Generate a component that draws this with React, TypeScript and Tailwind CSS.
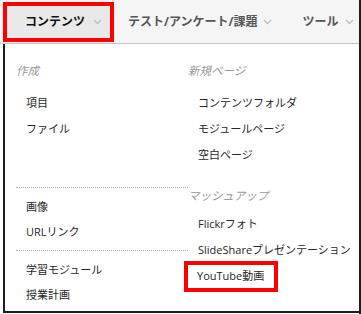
const font = { fontFamily: '"Open Sans", "Noto Sans CJK JP", sans-serif' };

function Chevron() {
  return (
    <svg width="9" height="6" viewBox="0 0 9 6" className="shrink-0">
      <polyline points="1,1 4.5,4.5 8,1" fill="none" stroke="#bdbdbd" strokeWidth="1.3" />
    </svg>
  );
}

function Header({ label }: { label: string }) {
  return (
    <div className="h-[20px] flex items-center text-[11.5px] italic text-[#999]">{label}</div>
  );
}

function Item({ label }: { label: string }) {
  return (
    <div className="h-[26px] flex items-center pl-[10px] text-[11px] text-[#262626] whitespace-nowrap">
      {label}
    </div>
  );
}

function Divider() {
  return <div className="border-t border-dotted border-[#b5b5b5]" />;
}

export default function App() {
  return (
    <div className="w-[361px] h-[314px] bg-white flex flex-col border-r-2 border-[#1e1e1e]" style={font}>
      <nav className="h-[44px] bg-[#f5f5f5] border-b border-[#c4c4c4] flex items-start pt-[2px] pl-[3px]">
        <div className="w-[111px] h-[40px] border-4 border-[#ff0000] bg-[#e9e9e9] flex items-center pl-[18px] gap-[8px]">
          <span className="text-[12px] font-bold text-[#111]">コンテンツ</span>
          <Chevron />
        </div>
        <div className="h-[40px] flex items-center ml-[14px] gap-[6px]">
          <span className="text-[12px] font-bold text-[#555]">テスト/アンケート/課題</span>
          <Chevron />
        </div>
        <div className="h-[40px] flex items-center ml-[30px] gap-[7px]">
          <span className="text-[12px] font-bold text-[#555]">ツール</span>
          <Chevron />
        </div>
      </nav>

      <div className="flex-1 ml-[3px] mb-[1px] border-l-2 border-b-2 border-[#1e1e1e] flex pl-[11px]">
        <div className="w-[172px] flex flex-col pt-[17px]">
          <Header label="作成" />
          <div className="mt-[9px]">
            <Item label="項目" />
            <Item label="ファイル" />
          </div>
          <div className="mt-[45px]">
            <Divider />
          </div>
          <div className="mt-[7px]">
            <div className="h-[25px] flex items-center pl-[10px] text-[11px] text-[#262626]">画像</div>
            <div className="h-[25px] flex items-center pl-[10px] text-[11px] text-[#262626]">URLリンク</div>
          </div>
          <div className="mt-[5px]">
            <Divider />
          </div>
          <div className="mt-[7px]">
            <div className="h-[25px] flex items-center pl-[10px] text-[11px] text-[#262626]">学習モジュール</div>
            <div className="h-[25px] flex items-center pl-[10px] text-[11px] text-[#262626]">授業計画</div>
          </div>
        </div>

        <div className="flex-1 flex flex-col pt-[17px]">
          <Header label="新規ページ" />
          <div className="mt-[9px]">
            <Item label="コンテンツフォルダ" />
            <Item label="モジュールページ" />
            <Item label="空白ページ" />
          </div>
          <div className="mt-[18px]">
            <Header label="マッシュアップ" />
          </div>
          <div className="mt-[5px]">
            <Item label="Flickrフォト" />
            <Item label="SlideShareプレゼンテーション" />
            <div className="-ml-[4px] -mt-[2px] w-[94px] h-[31px] border-4 border-[#ff0000] flex items-center pl-[9px] text-[11px] text-[#262626] whitespace-nowrap">
              YouTube動画
            </div>
          </div>
        </div>
      </div>
    </div>
  );
}
